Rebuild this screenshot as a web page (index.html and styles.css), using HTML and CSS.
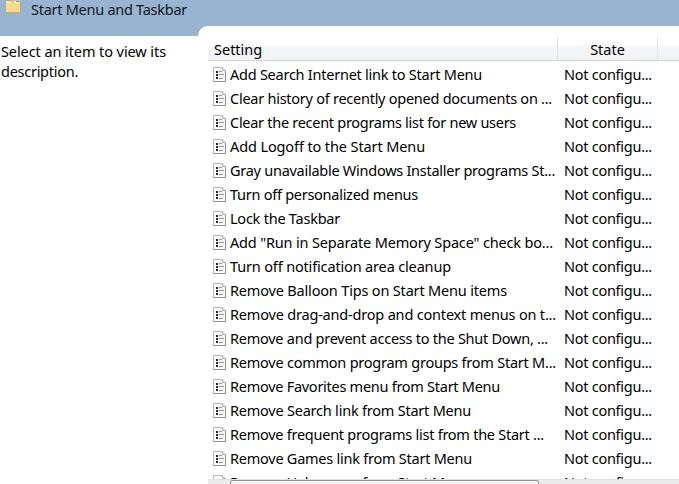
FILE: index.html
```html
<!DOCTYPE html>
<html lang="en">
<head>
<meta charset="utf-8">
<title>Start Menu and Taskbar</title>
<link rel="stylesheet" href="styles.css">
</head>
<body>
<svg class="defs" aria-hidden="true">
<symbol id="doc" viewBox="0 0 13 15">
<path d="M.5.5h9l3 3v11H.5z" fill="#fbfbfb" stroke="#b5b5b5"/>
<path d="M.5 14.5h12V4" fill="none" stroke="#8f8f8f"/>
<path d="M9.500.5v3h3" fill="#e8e8e8" stroke="#b5b5b5"/>
<path d="M3 4h2v2H3zM3 7h2v2H3zM3 10h2v2H3z" fill="#252538"/>
<path d="M6 4.500h3M6 7.500h5M6 11.500h4" stroke="#9290ad"/>
</symbol>
</svg>
<header class="title">
<svg class="folder" viewBox="0 0 15 14"><path d="M6 0h8v5H6z" fill="#e9c46f"/><path d="M8 1h5v2H8z" fill="#fff"/><path d="M10 1h3v1h-3z" fill="#3f97d3"/><path d="M0 1h5l2 2h7v10H0z" fill="#f5d98c"/><path d="M1 2h4l1 1H1z" fill="#fff0bb"/><path d="M0 12h14V4h1v9.500H0z" fill="#d3a94f"/></svg>
<h1>Start Menu and Taskbar</h1>
</header>
<main class="content">
<aside class="description"><span id="line1">Select an item to view its</span><br><span id="line2">description.</span></aside>
<section class="panel">
<div class="head"><span class="setting">Setting</span><span class="state">State</span><span class="rest"></span></div>
<div class="rows" id="rows"></div>
<div class="scroll"><div class="thumb"></div></div>
</section>
</main>
<script src="script.js"></script>
</body>
</html>
```
FILE: styles.css
```css
* { box-sizing: border-box; }
body { margin: 0; width: 679px; height: 484px; overflow: hidden; background: #fff; color: #000; font: 14.5px/21px "Noto Sans", "Open Sans", sans-serif; }
.defs { display: none; }
.title { height: 36px; background: #99b4d1; display: flex; align-items: flex-start; padding-left: 6px; color: #101820; }
.folder { width: 15px; height: 14px; margin-right: 10px; flex: none; }
h1 { margin: 0; font: inherit; line-height: 19px; white-space: nowrap; }
.content { display: flex; height: 448px; }
.description { width: 198px; flex: none; padding: 5px 0 0 1px; white-space: nowrap; line-height: 20px; }
.panel { width: 481px; height: 458px; margin-top: -10px; padding: 11px 0 0 10px; background: #fff; border-top-left-radius: 10px; display: flex; flex-direction: column; overflow: hidden; }
.head { display: flex; height: 24px; flex: none; border-bottom: 1px solid #d5d5d5; background: linear-gradient(#fff 33%, #f7f8fa 34%, #f1f2f4); line-height: 25px; }
.setting { width: 350px; padding-left: 6px; border-right: 1px solid #e2e3e5; }
.state { width: 100px; text-align: center; border-right: 1px solid #e2e3e5; }
.rest { flex: 1; }
.rows { height: 418px; padding-top: 2px; overflow: hidden; flex: none; }
.row { display: flex; height: 24px; line-height: 22px; padding-left: 5px; white-space: nowrap; }
.row svg { width: 13px; height: 15px; margin: 4px 4px 0 0; flex: none; }
.name { width: 334px; flex: none; }
.scroll { height: 5px; flex: none; background: #ececec; padding-left: 22px; border-top: 1px solid #e2e2e2; }
.thumb { width: 309px; height: 8px; border: 1px solid #929292; border-radius: 2px; background: #f3f3f3; }
```
FILE: script.js
```js
// Each entry holds a label and its fitted width in pixels.
const settings = [
  ["Add Search Internet link to Start Menu", 252],
  ["Clear history of recently opened documents on ...", 322],
  ["Clear the recent programs list for new users", 286],
  ["Add Logoff to the Start Menu", 195],
  ["Gray unavailable Windows Installer programs St...", 325],
  ["Turn off personalized menus", 188],
  ["Lock the Taskbar", 110],
  ["Add \"Run in Separate Memory Space\" check bo...", 323],
  ["Turn off notification area cleanup", 221],
  ["Remove Balloon Tips on Start Menu items", 277],
  ["Remove drag-and-drop and context menus on t...", 326],
  ["Remove and prevent access to the Shut Down, ...", 318],
  ["Remove common program groups from Start M...", 326],
  ["Remove Favorites menu from Start Menu", 270],
  ["Remove Search link from Start Menu", 241],
  ["Remove frequent programs list from the Start ...", 314],
  ["Remove Games link from Start Menu", 242],
  ["Remove Help menu from Start Menu", 240]
];

function fit(el, width) {
  const range = document.createRange();
  range.selectNodeContents(el);
  const natural = range.getBoundingClientRect().width;
  el.style.letterSpacing = (width - natural) / el.textContent.length + "px";
}

const rows = document.getElementById("rows");
for (const [label, width] of settings) {
  const row = document.createElement("div");
  row.className = "row";
  row.innerHTML = '<svg><use href="#doc"/></svg><span class="name"></span><span class="value">Not configu...</span>';
  const name = row.querySelector(".name");
  name.textContent = label;
  rows.append(row);
  fit(name, width);
  fit(row.querySelector(".value"), 88);
}
fit(document.querySelector("h1"), 156);
fit(document.getElementById("line1"), 165);
fit(document.getElementById("line2"), 77);
```
